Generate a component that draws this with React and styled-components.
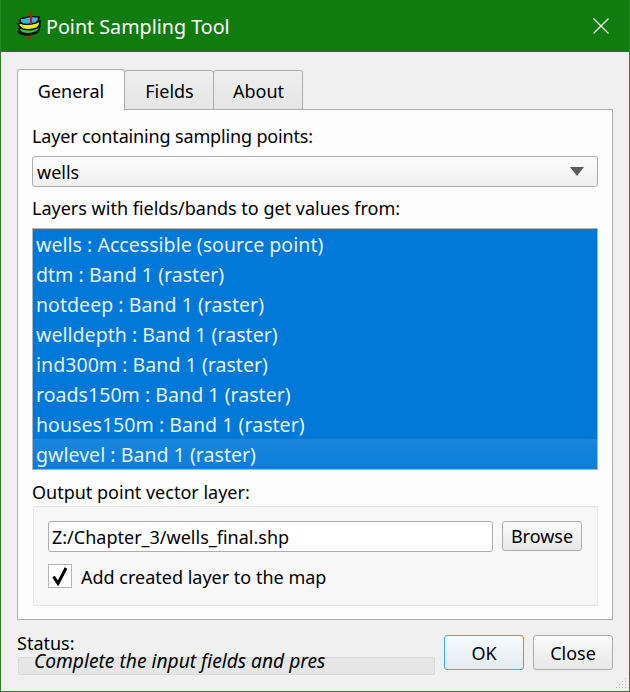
import React from "react";
import styled, { createGlobalStyle } from "styled-components";

const layers = [
  "wells : Accessible (source point)",
  "dtm : Band 1 (raster)",
  "notdeep : Band 1 (raster)",
  "welldepth : Band 1 (raster)",
  "ind300m : Band 1 (raster)",
  "roads150m : Band 1 (raster)",
  "houses150m : Band 1 (raster)",
  "gwlevel : Band 1 (raster)",
];

export default function App() {
  return (
    <Dialog>
      <Global />
      <TitleBar>
        <AppIcon />
        <Title>Point Sampling Tool</Title>
        <CloseIcon />
      </TitleBar>
      <Body>
        <TabBar>
          <Tab $active>General</Tab>
          <Tab>Fields</Tab>
          <Tab>About</Tab>
        </TabBar>
        <Pane>
          <Label $tight>Layer containing sampling points:</Label>
          <Combo>
            <span>wells</span>
            <Arrow />
          </Combo>
          <Label $top={9}>Layers with fields/bands to get values from:</Label>
          <LayerList>
            {layers.map((name, i) => (
              <LayerRow key={name} $hover={i === layers.length - 1}>
                {name}
              </LayerRow>
            ))}
          </LayerList>
          <Label $top={10}>Output point vector layer:</Label>
          <Group>
            <OutputRow>
              <PathInput>Z:/Chapter_3/wells_final.shp</PathInput>
              <BrowseButton>Browse</BrowseButton>
            </OutputRow>
            <CheckRow>
              <CheckBox>
                <svg width="18" height="20" viewBox="0 0 18 20">
                  <path d="M2.5 10.5 L7 17.5 L15 2" fill="none" stroke="#000" strokeWidth="3" />
                </svg>
              </CheckBox>
              <CheckText>Add created layer to the map</CheckText>
            </CheckRow>
          </Group>
        </Pane>
        <Footer>
          <StatusArea>
            <StatusLabel>Status:</StatusLabel>
            <ProgressBar>
              <ProgressText>Complete the input fields and press OK</ProgressText>
            </ProgressBar>
          </StatusArea>
          <DialogButton $primary>OK</DialogButton>
          <DialogButton>Close</DialogButton>
        </Footer>
      </Body>
      <Grip />
    </Dialog>
  );
}

function AppIcon() {
  return (
    <IconSvg width="26" height="28" viewBox="0 0 26 28">
      <path d="M13 23 V28" stroke="#c8161a" strokeWidth="2.4" />
      <path d="M1 19 Q6 16 12 19 Q18 20 24 16 Q24 20 20 22 Q13 25 6 23 Q2 22 1 19 Z" fill="#111" />
      <path d="M3 17 Q8 14 13 16 Q18 17 24 14 Q23 19 20 20 Q13 23 7 21 Q4 20 3 17 Z" fill="#27d43a" stroke="#0a0a0a" strokeWidth="1.4" />
      <path d="M2 12 Q7 10 12 11 Q18 12 24 9 Q24 14 21 16 Q14 19 7 17 Q3 15 2 12 Z" fill="#f2ee1c" stroke="#0a0a0a" strokeWidth="1.6" />
      <path d="M4 8 Q4 6 8 6 Q15 4 23 5 Q23 9 20 11 Q12 13 7 12 Q4 11 4 8 Z" fill="#34b4de" stroke="#0a0a0a" strokeWidth="1.4" />
      <path d="M15 0 V12" stroke="#c8161a" strokeWidth="2.2" />
    </IconSvg>
  );
}

function CloseIcon() {
  return (
    <CloseSvg width="16" height="16" viewBox="0 0 16 16">
      <path d="M0.5 0.5 L15.5 15.5 M15.5 0.5 L0.5 15.5" stroke="#fff" strokeWidth="1.1" />
    </CloseSvg>
  );
}

function Arrow() {
  return (
    <svg width="14" height="9" viewBox="0 0 14 9">
      <path d="M0 0 H14 L7 9 Z" fill="#5c5c5c" />
    </svg>
  );
}

function Grip() {
  return (
    <GripSvg width="12" height="12" viewBox="0 0 12 12">
      {[[9, 0], [6, 3], [9, 3], [3, 6], [6, 6], [9, 6], [0, 9], [3, 9], [6, 9], [9, 9]].map(([x, y]) => (
        <rect key={`${x}-${y}`} x={x} y={y} width="1" height="1" fill="#b4b4b4" />
      ))}
    </GripSvg>
  );
}

const Global = createGlobalStyle`
  html, body {
    margin: 0;
    padding: 0;
    background: #f0f0f0;
  }
  * {
    box-sizing: border-box;
  }
`;

const Dialog = styled.div`
  position: relative;
  width: 630px;
  height: 692px;
  display: flex;
  flex-direction: column;
  overflow: hidden;
  font-family: "Noto Sans", sans-serif;
  font-size: 18px;
  color: #000;
  background: #f0f0f0;
  border: 1px solid #2b832b;
  border-top: none;
`;

const TitleBar = styled.div`
  height: 52px;
  flex: none;
  display: flex;
  align-items: center;
  padding: 0 21px 0 16px;
  margin: 0 -1px;
  background: #107c10;
  color: #fff;
`;

const IconSvg = styled.svg`
  flex: none;
  margin-right: 4px;
`;

const Title = styled.div`
  flex: 1;
  font-size: 19.7px;
`;

const CloseSvg = styled.svg`
  flex: none;
`;

const Body = styled.div`
  flex: 1;
  display: flex;
  flex-direction: column;
  padding: 16px 16px 0 16px;
`;

const TabBar = styled.div`
  display: flex;
  align-items: flex-end;
  height: 42px;
  position: relative;
  z-index: 1;
`;

const Tab = styled.div`
  display: flex;
  align-items: center;
  justify-content: center;
  width: ${(p) => (p.$active ? 108 : 90)}px;
  height: ${(p) => (p.$active ? 42 : 40)}px;
  margin-left: ${(p) => (p.$active ? 0 : -1)}px;
  padding-top: ${(p) => (p.$active ? 0 : 2)}px;
  padding-left: ${(p) => (p.$active ? 0 : 1)}px;
  border: 1px solid #adadad;
  border-bottom: ${(p) => (p.$active ? "none" : "1px solid #adadad")};
  border-radius: 3px 3px 0 0;
  background: ${(p) => (p.$active ? "#fdfdfd" : "linear-gradient(#efefef, #e5e5e5)")};
  margin-bottom: ${(p) => (p.$active ? -1 : 0)}px;
`;

const Pane = styled.div`
  height: 511px;
  flex: none;
  margin-top: -1px;
  padding: 14px 14px 0 14px;
  border: 1px solid #adadad;
  background: #fdfdfd;
  display: flex;
  flex-direction: column;
`;

const Label = styled.div`
  height: 24px;
  line-height: 24px;
  margin-top: ${(p) => p.$top || 0}px;
  letter-spacing: ${(p) => (p.$tight ? "-0.15px" : "0")};
`;

const Combo = styled.div`
  height: 31px;
  margin-top: 8px;
  padding: 0 13px 0 4px;
  display: flex;
  align-items: center;
  justify-content: space-between;
  border: 1px solid #adadad;
  border-radius: 3px;
  background: linear-gradient(#fdfdfd, #efefef);
`;

const LayerList = styled.div`
  height: 242px;
  margin-top: 8px;
  border: 1px solid #a9b7c4;
  background: #0078d7;
  color: #e4f2fc;
`;

const LayerRow = styled.div`
  height: 30px;
  line-height: 32px;
  padding-left: 3px;
  font-size: 19.6px;
  background: ${(p) => (p.$hover ? "linear-gradient(#1a86dc, #0a7dd9)" : "transparent")};
`;

const Group = styled.div`
  height: 100px;
  margin: 2px 0 0 1px;
  padding: 14px 15px 0 14px;
  border: 1px solid #e6e6e6;
  border-radius: 2px;
  background: #f8f8f8;
`;

const OutputRow = styled.div`
  display: flex;
  align-items: flex-start;
  gap: 9px;
`;

const PathInput = styled.div`
  flex: 1;
  height: 31px;
  line-height: 30px;
  padding-left: 3px;
  border: 1px solid #adadad;
  border-radius: 3px;
  background: #fff;
`;

const BrowseButton = styled.div`
  width: 80px;
  height: 30px;
  line-height: 29px;
  text-align: center;
  border: 1px solid #adadad;
  border-radius: 3px;
  background: linear-gradient(#fbfbfb, #e8e8e8);
`;

const CheckRow = styled.div`
  display: flex;
  align-items: center;
  gap: 9px;
  margin-top: 11px;
`;

const CheckBox = styled.div`
  width: 24px;
  height: 24px;
  display: flex;
  align-items: center;
  justify-content: center;
  border: 1px solid #b5b5b5;
  background: #fff;
`;

const CheckText = styled.span`
  padding-top: 2px;
`;

const Footer = styled.div`
  flex: 1;
  display: flex;
  align-items: flex-start;
  padding-top: 15px;
`;

const StatusArea = styled.div`
  width: 418px;
  margin: -2px 9px 0 0;
`;

const StatusLabel = styled.div`
  height: 20px;
  line-height: 20px;
`;

const ProgressBar = styled.div`
  position: relative;
  height: 18px;
  margin: 4px 0 0 1px;
  border: 1px solid #d9d9d9;
  border-radius: 2px;
  background: #e6e6e6;
`;

const ProgressText = styled.div`
  position: absolute;
  left: 15px;
  top: -10px;
  width: 291px;
  height: 26px;
  line-height: 26px;
  overflow: hidden;
  white-space: nowrap;
  font-style: italic;
  font-size: 19.2px;
`;

const DialogButton = styled.div`
  width: 80px;
  height: 35px;
  line-height: 34px;
  margin-left: ${(p) => (p.$primary ? 0 : 9)}px;
  text-align: center;
  border: 1px solid ${(p) => (p.$primary ? "#4aa6ee" : "#adadad")};
  border-radius: 3px;
  background: ${(p) =>
    p.$primary ? "linear-gradient(#f7fbfe, #e3ebf2)" : "linear-gradient(#fbfbfb, #e8e8e8)"};
`;

const GripSvg = styled.svg`
  position: absolute;
  right: 1px;
  bottom: 1px;
`;
